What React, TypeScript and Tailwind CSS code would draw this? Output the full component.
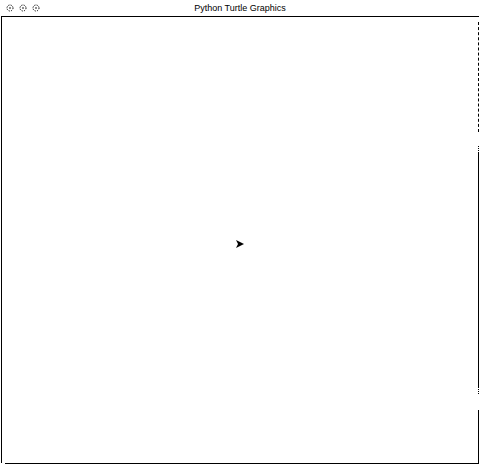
import React from 'react';

function WinButton() {
  return (
    <svg width="8" height="8" viewBox="0 0 8 8" className="block">
      <circle cx="4" cy="4" r="3" fill="none" stroke="#000" strokeWidth="1" strokeDasharray="1.2 1.2" />
      <circle cx="4" cy="4" r="0.8" fill="#000" />
    </svg>
  );
}

function Turtle() {
  return (
    <svg width="8" height="8" viewBox="0 0 8 8" className="block">
      <polygon points="0,0 8,4 0,8 2,4" fill="#000" />
    </svg>
  );
}

export default function App() {
  return (
    <div className="w-[480px] h-[468px] bg-white flex flex-col font-['Liberation_Sans',Arial,sans-serif] text-black">
      {/* title bar */}
      <div className="relative h-[16px] flex items-center">
        <div className="flex items-center gap-[5px] pl-[6px]">
          <WinButton />
          <WinButton />
          <WinButton />
        </div>
        <div className="absolute inset-0 flex items-center justify-center text-[9px] leading-none">
          Python Turtle Graphics
        </div>
      </div>

      {/* canvas */}
      <div className="ml-[1px] w-[478px] flex flex-col border-t border-black">
        <div className="flex h-[446px]">
          <div className="w-[1px] bg-black" />
          <div className="flex-1 flex items-center justify-center pt-[8px]">
            <Turtle />
          </div>
          <div className="w-[1px] flex flex-col">
            <div className="h-[5px]" />
            <div className="h-[110px] border-l border-dashed border-black" />
            <div className="h-[14px]" />
            <div className="h-[7px] border-l border-dotted border-black" />
            <div className="h-[234px] bg-black" />
            <div className="h-[7px] border-l border-dotted border-black" />
            <div className="h-[16px]" />
            <div className="flex-1 bg-black" />
          </div>
        </div>
        <div className="ml-[4px] h-[1px] bg-black" />
      </div>
    </div>
  );
}
